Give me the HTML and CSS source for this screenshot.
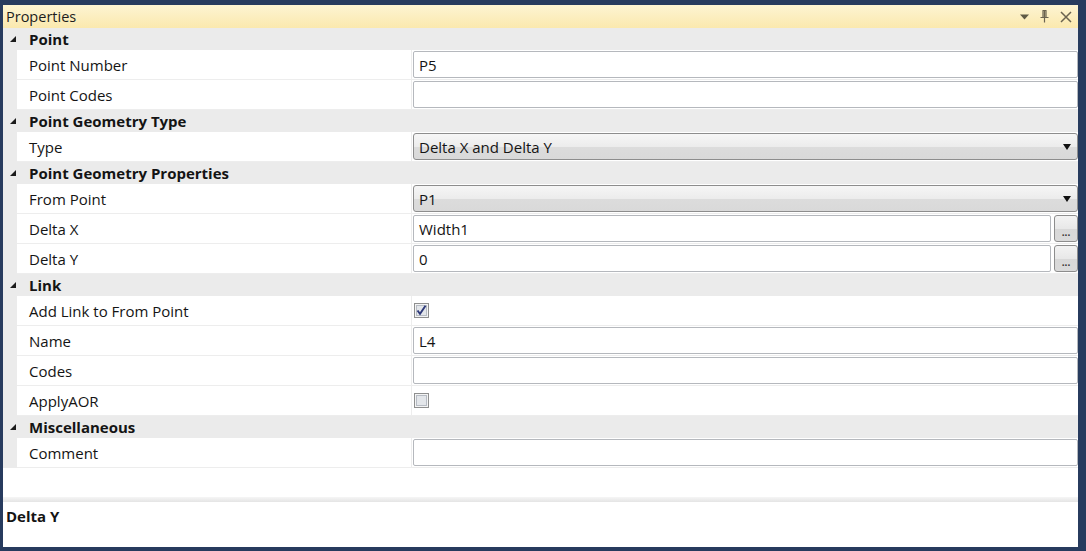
FILE: index.html
```html
<!DOCTYPE html>
<html>
<head>
<meta charset="utf-8">
<link rel="stylesheet" href="styles.css">
</head>
<body>
<div class="panel">
  <div class="titlebar">
    <span class="title">Properties</span>
    <div class="tools">
      <svg width="9" height="6" viewBox="0 0 9 6"><path d="M0 0.5h9L4.5 5.5z" fill="#5f5a45"/></svg>
      <svg width="9" height="13" viewBox="0 0 9 13"><path d="M2.5 0.5h4M3 0.5v7M6 0.5v7M4.5 0.5v7M0.5 7.5h8M4.5 7.5v5" stroke="#6a6350" stroke-width="1.2" fill="none"/></svg>
      <svg width="12" height="12" viewBox="0 0 12 12"><path d="M1 1l10 10M11 1l-10 10" stroke="#6a6350" stroke-width="1.5" fill="none"/></svg>
    </div>
  </div>

  <div class="grid">
    <div class="cat"><span class="tri"></span><span class="cat-name">Point</span></div>
    <div class="row"><div class="gutter"></div><div class="label">Point Number</div><div class="value"><div class="input">P5</div></div></div>
    <div class="row"><div class="gutter"></div><div class="label">Point Codes</div><div class="value"><div class="input"></div></div></div>

    <div class="cat"><span class="tri"></span><span class="cat-name">Point Geometry Type</span></div>
    <div class="row"><div class="gutter"></div><div class="label">Type</div><div class="value"><div class="combo"><span>Delta X and Delta Y</span><span class="arrow"></span></div></div></div>

    <div class="cat"><span class="tri"></span><span class="cat-name">Point Geometry Properties</span></div>
    <div class="row"><div class="gutter"></div><div class="label">From Point</div><div class="value"><div class="combo"><span>P1</span><span class="arrow"></span></div></div></div>
    <div class="row"><div class="gutter"></div><div class="label">Delta X</div><div class="value"><div class="input">Width1</div><div class="ellip">...</div></div></div>
    <div class="row"><div class="gutter"></div><div class="label">Delta Y</div><div class="value"><div class="input">0</div><div class="ellip">...</div></div></div>

    <div class="cat"><span class="tri"></span><span class="cat-name">Link</span></div>
    <div class="row"><div class="gutter"></div><div class="label">Add Link to From Point</div><div class="value plain">
      <svg class="check" width="15" height="15" viewBox="0 0 15 15"><rect x="0.5" y="0.5" width="14" height="14" fill="#f4f4f4" stroke="#8e8f8f"/><rect x="2.5" y="2.5" width="10" height="10" fill="#e3e6ea" stroke="#b7bcc4"/><path d="M3.5 7.5l2.5 3.3 5.5-8" stroke="#2f3a7a" stroke-width="1.9" fill="none"/></svg>
    </div></div>
    <div class="row"><div class="gutter"></div><div class="label">Name</div><div class="value"><div class="input">L4</div></div></div>
    <div class="row"><div class="gutter"></div><div class="label">Codes</div><div class="value"><div class="input"></div></div></div>
    <div class="row"><div class="gutter"></div><div class="label">ApplyAOR</div><div class="value plain">
      <svg class="check" width="15" height="15" viewBox="0 0 15 15"><rect x="0.5" y="0.5" width="14" height="14" fill="#f4f4f4" stroke="#8e8f8f"/><rect x="2.5" y="2.5" width="10" height="10" fill="#e3e6ea" stroke="#b7bcc4"/></svg>
    </div></div>

    <div class="cat"><span class="tri"></span><span class="cat-name">Miscellaneous</span></div>
    <div class="row"><div class="gutter"></div><div class="label">Comment</div><div class="value"><div class="input"></div></div></div>
  </div>

  <div class="spacer"></div>
  <div class="splitter"></div>
  <div class="desc">Delta Y</div>
</div>
</body>
</html>
```

FILE: styles.css
```css
html, body {
  margin: 0;
  padding: 0;
}
body {
  width: 1086px;
  height: 551px;
  background: #273b5e;
  padding: 5px 8px 4px 3px;
  box-sizing: border-box;
  font-family: "Open Sans", "Noto Sans", sans-serif;
  font-size: 15px;
  color: #141414;
}
.panel {
  background: #ffffff;
  height: 542px;
  display: flex;
  flex-direction: column;
}
.titlebar {
  height: 23px;
  flex: none;
  background: linear-gradient(#fdf4d2, #fbe9ae);
  display: flex;
  align-items: center;
  justify-content: space-between;
  padding: 0 6px 0 3px;
}
.title {
  color: #1d1d1d;
  font-size: 14.5px;
}
.tools {
  display: flex;
  align-items: center;
  gap: 11px;
}
.grid {
  display: flex;
  flex-direction: column;
  flex: none;
}
.cat {
  height: 22px;
  background: #ebebeb;
  display: flex;
  align-items: center;
  font-weight: 700;
}
.tri {
  width: 26px;
  flex: none;
  position: relative;
  height: 22px;
}
.tri::before {
  content: "";
  position: absolute;
  left: 7px;
  top: 8px;
  border-style: solid;
  border-width: 0 0 6px 6px;
  border-color: transparent transparent #1b1b1b transparent;
}
.row {
  height: 30px;
  display: flex;
}
.gutter {
  width: 14px;
  flex: none;
  background: #ebebeb;
}
.label {
  width: 382px;
  flex: none;
  padding-left: 12px;
  display: flex;
  align-items: center;
  border-bottom: 1px solid #ededed;
  border-right: 1px solid #ededed;
}
.value {
  flex: 1;
  display: flex;
  align-items: stretch;
  padding: 1px 0 1px 1px;
  gap: 3px;
  border-bottom: 1px solid #ededed;
  min-width: 0;
}
.value.plain {
  align-items: center;
  padding-left: 2px;
}
.input {
  flex: 1;
  border: 1px solid #b5b8bd;
  border-radius: 2px;
  padding-left: 5px;
  display: flex;
  align-items: center;
  background: #ffffff;
}
.combo {
  flex: 1;
  border: 1px solid #8d8d8d;
  border-radius: 3px;
  padding: 0 6px 0 5px;
  display: flex;
  align-items: center;
  justify-content: space-between;
  background: linear-gradient(#f6f6f6 0%, #ececec 50%, #dcdcdc 51%, #d9d9d9 100%);
}
.arrow {
  width: 0;
  height: 0;
  border-left: 4.5px solid transparent;
  border-right: 4.5px solid transparent;
  border-top: 6px solid #111111;
}
.ellip {
  width: 24px;
  flex: none;
  border: 1px solid #8d8d8d;
  border-radius: 3px;
  background: linear-gradient(#f3f3f3 0%, #e8e8e8 50%, #d8d8d8 51%, #dadada 100%);
  font-size: 10px;
  font-weight: 700;
  color: #333;
  display: flex;
  align-items: flex-end;
  justify-content: center;
  padding-bottom: 4px;
  box-sizing: border-box;
  line-height: 10px;
}
.check {
  display: block;
}
.spacer {
  flex: 1;
}
.splitter {
  height: 5px;
  flex: none;
  background: linear-gradient(#f6f6f6, #e4e4e4);
}
.desc {
  height: 45px;
  flex: none;
  padding: 4px 0 0 3px;
  font-weight: 700;
  box-sizing: border-box;
}
```
